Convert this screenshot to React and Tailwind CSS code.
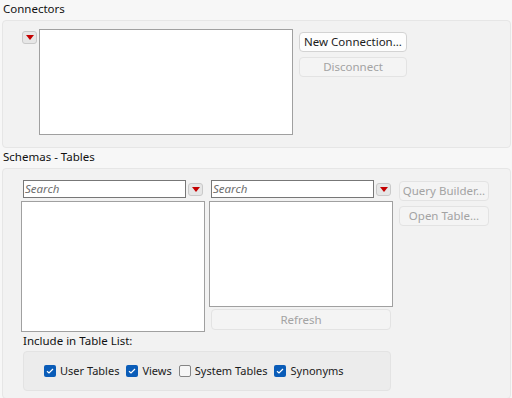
const font = { fontFamily: '"Noto Sans", "Open Sans", sans-serif' };

function DropBtn({ className = "" }) {
  return (
    <div
      className={`flex h-[13px] w-[15px] shrink-0 items-center justify-center rounded-[3px] border border-[#c9c9c9] bg-[#e6e6e6] ${className}`}
    >
      <svg width="8" height="5" viewBox="0 0 8 5">
        <path d="M0 0 L8 0 L4 5 Z" fill="#c40000" />
      </svg>
    </div>
  );
}

function Btn({ children, disabled, className = "" }) {
  return (
    <div
      className={`flex items-center justify-center rounded-[4px] border text-[11.5px] ${
        disabled
          ? "border-[#e3e3e3] bg-[#f4f4f4] text-[#a3a3a3]"
          : "border-[#d3d3d3] bg-[#fdfdfd] text-[#1b1b1b]"
      } ${className}`}
    >
      {children}
    </div>
  );
}

function Check({ checked, label }) {
  return (
    <div className="flex items-center">
      {checked ? (
        <div className="flex h-[12px] w-[12px] items-center justify-center rounded-[2px] bg-[#0a5cb8]">
          <svg width="8" height="6" viewBox="0 0 8 6">
            <path d="M1 3.2 L3 5 L7 1" stroke="#fff" strokeWidth="1.2" fill="none" />
          </svg>
        </div>
      ) : (
        <div className="h-[12px] w-[12px] rounded-[2px] border border-[#858585] bg-[#f6f6f6]" />
      )}
      <span className="ml-[4px] text-[11px] text-[#1b1b1b]">{label}</span>
    </div>
  );
}

function SearchBox() {
  return (
    <div className="flex h-[18px] w-[163px] items-center border border-[#777] bg-white pl-[1px] text-[11.5px] italic text-[#6e6e6e]">
      Search
    </div>
  );
}

export default function App() {
  return (
    <div
      className="h-[398px] w-[512px] overflow-hidden bg-[#f7f7f7] text-[11px] text-[#1b1b1b]"
      style={font}
    >
      <div className="h-[20px] pl-[3px] text-[11.5px] leading-[18px] text-[#111]">Connectors</div>
      <div className="ml-[2px] flex h-[128px] w-[509px] rounded-[4px] border border-[#e6e6e6] bg-[#f2f2f2] pl-[19px] pt-[8px]">
        <DropBtn className="mt-[2px]" />
        <div className="ml-[2px] h-[106px] w-[254px] border border-[#a0a0a0] bg-white" />
        <div className="ml-[6px] mt-[3px] flex flex-col gap-[5px]">
          <Btn className="h-[20px] w-[108px]">New Connection...</Btn>
          <Btn disabled className="h-[20px] w-[108px]">
            Disconnect
          </Btn>
        </div>
      </div>
      <div className="h-[20px] pl-[3px] text-[11.5px] leading-[18px] text-[#111]">Schemas - Tables</div>
      <div className="ml-[2px] h-[231px] w-[509px] rounded-[4px] border border-[#e6e6e6] bg-[#f2f2f2] pl-[18px] pt-[11px]">
        <div className="flex">
          <div className="flex w-[184px] flex-col">
            <div className="ml-[2px] flex items-center">
              <SearchBox />
              <DropBtn className="ml-[2px]" />
            </div>
            <div className="mt-[3px] h-[131px] w-[184px] border border-[#a0a0a0] bg-white" />
          </div>
          <div className="ml-[4px] flex w-[184px] flex-col">
            <div className="ml-[2px] flex items-center">
              <SearchBox />
              <DropBtn className="ml-[2px]" />
            </div>
            <div className="mt-[3px] h-[106px] w-[184px] border border-[#a0a0a0] bg-white" />
            <Btn disabled className="ml-[2px] mt-[2px] h-[21px] w-[180px]">
              Refresh
            </Btn>
          </div>
          <div className="ml-[6px] mt-[1px] flex flex-col gap-[5px]">
            <Btn disabled className="h-[20px] w-[90px]">
              Query Builder...
            </Btn>
            <Btn disabled className="h-[20px] w-[90px]">
              Open Table...
            </Btn>
          </div>
        </div>
        <div className="ml-[2px] mt-[1px] h-[16px] text-[11.5px] leading-[16px] text-[#111]">Include in Table List:</div>
        <div className="ml-[2px] mt-[2px] flex h-[40px] w-[368px] items-center gap-[7px] rounded-[4px] border border-[#e3e3e3] bg-[#ececec] pl-[20px]">
          <Check checked label="User Tables" />
          <Check checked label="Views" />
          <Check label="System Tables" />
          <Check checked label="Synonyms" />
        </div>
      </div>
    </div>
  );
}
